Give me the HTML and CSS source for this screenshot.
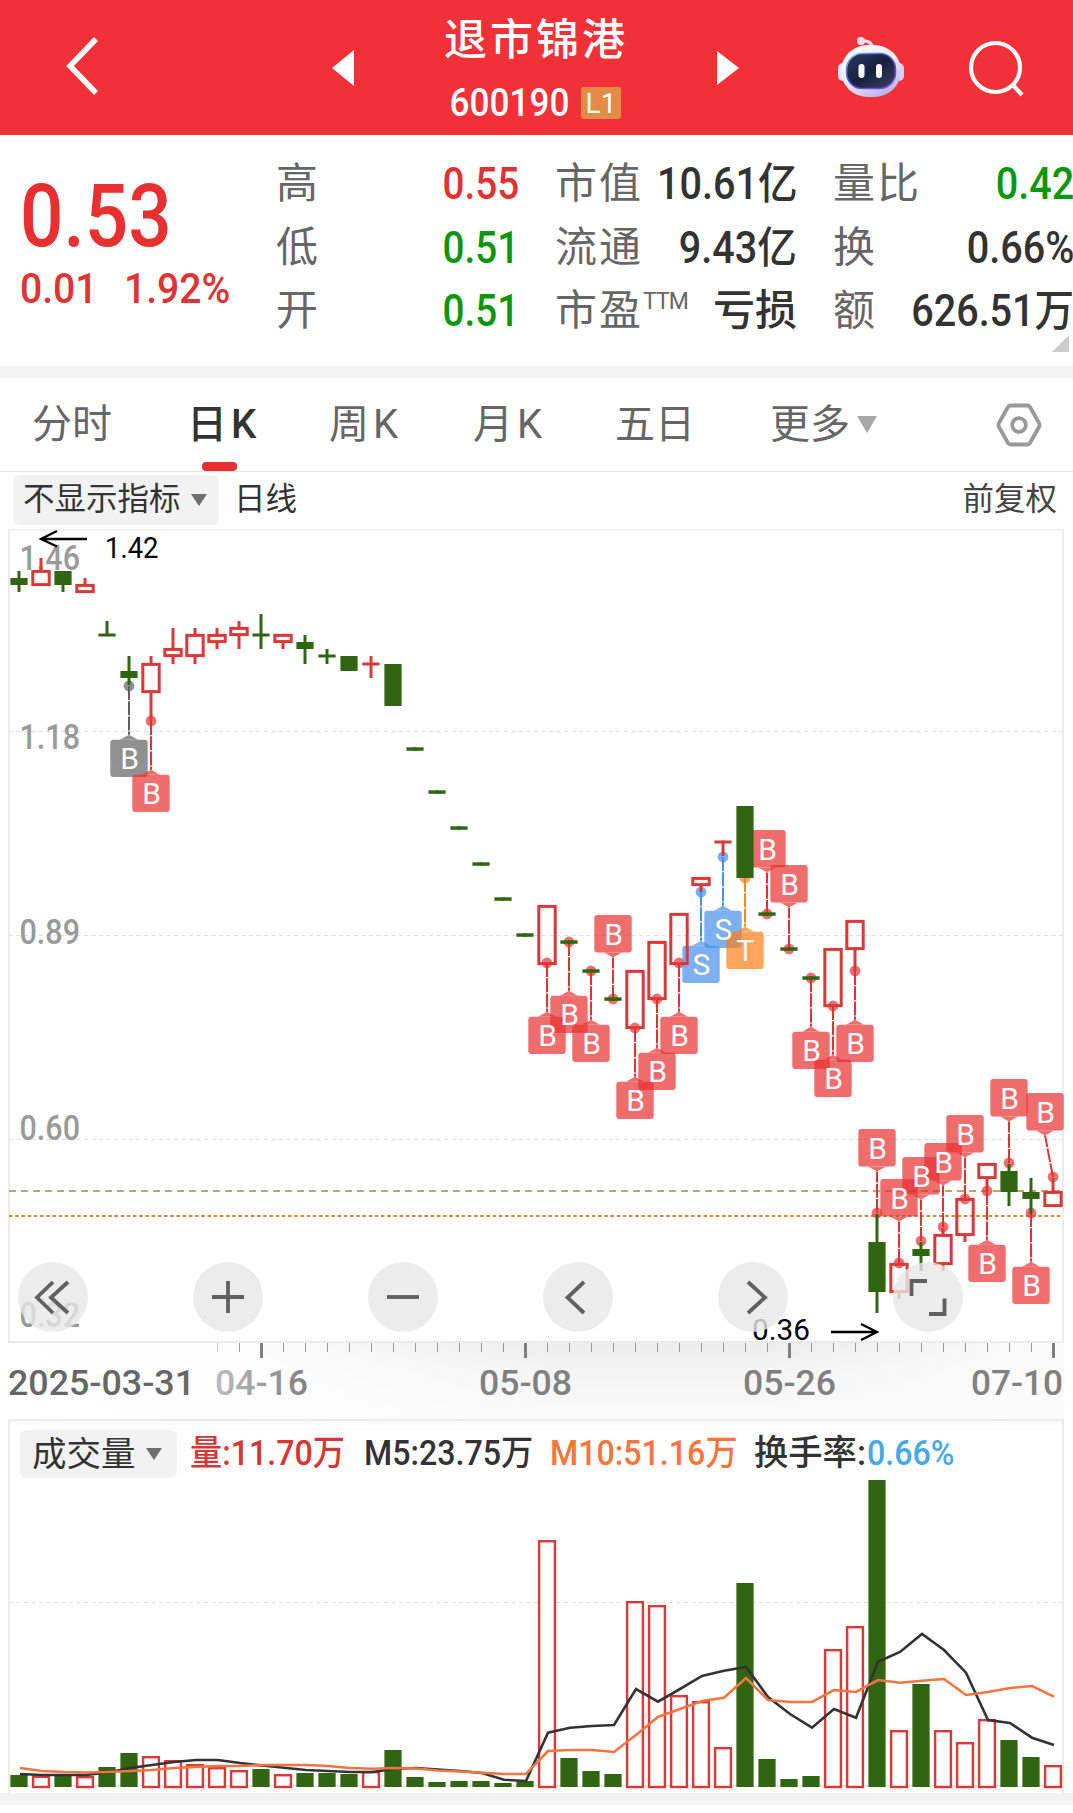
FILE: index.html
```html
<!DOCTYPE html>
<html lang="zh-CN">
<head>
<meta charset="utf-8">
<title>退市锦港 600190</title>
<link rel="stylesheet" href="styles.css">
</head>
<body>
<header class="topbar">
  <svg class="back" width="40" height="64" viewBox="0 0 40 64"><path d="M33 5 7 32 33 59"/></svg>
  <svg class="prev" width="22" height="36" viewBox="0 0 22 36"><path d="M0 18 22 0V36Z"/></svg>
  <div class="stock">
    <div class="stock-name">退市锦港</div>
    <div class="stock-code"><span class="code-num">600190</span><span class="level">L1</span></div>
  </div>
  <svg class="next" width="22" height="36" viewBox="0 0 22 36"><path d="M22 18 0 1V35Z"/></svg>
  <svg class="robot" width="68" height="64" viewBox="0 0 68 64">
    <defs>
      <linearGradient id="shell" x1="0" y1="0" x2="0.6" y2="1"><stop offset="0" stop-color="#fff"/><stop offset=".6" stop-color="#eeeafa"/><stop offset="1" stop-color="#bdb6e8"/></linearGradient>
      <linearGradient id="rim" x1="0" y1="0" x2="1" y2="1"><stop offset="0" stop-color="#69d6f2"/><stop offset=".45" stop-color="#4a4ad0"/><stop offset="1" stop-color="#8a4be0"/></linearGradient>
      <linearGradient id="visor" x1="0" y1="0" x2="1" y2="1"><stop offset="0" stop-color="#2d3a60"/><stop offset=".5" stop-color="#18203f"/><stop offset="1" stop-color="#3a4165"/></linearGradient>
    </defs>
    <path d="M24 6Q34 5 35.500 12" fill="none" stroke="#f3e4ee" stroke-width="3"/>
    <circle cx="24" cy="6" r="4" fill="#fbdfe6"/>
    <rect x="1" y="28" width="10" height="18" rx="5" fill="#e9e7fa"/>
    <rect x="57" y="28" width="10" height="18" rx="5" fill="#d6d2f4"/>
    <rect x="4" y="10" width="60" height="52" rx="27" fill="url(#shell)"/>
    <rect x="9.500" y="18.500" width="49" height="35" rx="16" fill="url(#visor)" stroke="url(#rim)" stroke-width="1.600"/>
    <rect x="21.500" y="29" width="6" height="14" rx="3" fill="#fff"/>
    <rect x="39" y="29" width="6" height="14" rx="3" fill="#fff"/>
  </svg>
  <svg class="search" width="60" height="60" viewBox="0 0 60 60"><circle cx="28.500" cy="29.500" r="24.500"/><path d="M46 47 55 57"/></svg>
</header>

<section class="quote">
  <div class="price-block">
    <div class="price">0.53</div>
    <div class="change"><span>0.01</span><span>1.92%</span></div>
  </div>
  <div class="col">
    <div class="row"><span class="key">高</span><span class="val up">0.55</span></div>
    <div class="row"><span class="key">低</span><span class="val down">0.51</span></div>
    <div class="row"><span class="key">开</span><span class="val down">0.51</span></div>
  </div>
  <div class="col">
    <div class="row"><span class="key">市值</span><span class="val">10.61亿</span></div>
    <div class="row"><span class="key">流通</span><span class="val">9.43亿</span></div>
    <div class="row"><span class="key">市盈<sup>TTM</sup></span><span class="val cjk">亏损</span></div>
  </div>
  <div class="col">
    <div class="row"><span class="key">量比</span><span class="val down">0.42</span></div>
    <div class="row"><span class="key">换</span><span class="val">0.66%</span></div>
    <div class="row"><span class="key">额</span><span class="val">626.51万</span></div>
  </div>
  <i class="corner"></i>
</section>

<nav class="tabs">
  <span class="tab t1">分时</span>
  <span class="tab t2 active">日<b>K</b></span>
  <span class="tab t3">周<b>K</b></span>
  <span class="tab t4">月<b>K</b></span>
  <span class="tab t5">五日</span>
  <span class="tab t6">更多<i class="caret big"></i></span>
  <svg class="gear" width="46" height="46" viewBox="0 0 46 46"><path d="M14.500 3.500h17q1.500 0 2.500 1.500l9 16q1 2 0 4l-9 16q-1 1.500-2.500 1.500h-17q-1.500 0-2.500-1.500l-9-16q-1-2 0-4l9-16q1-1.500 2.500-1.500z"/><circle cx="23" cy="23" r="6.800"/></svg>
</nav>

<div class="toolbar">
  <span class="pill"><span>不显示指标</span><i class="caret"></i></span>
  <span class="period">日线</span>
  <span class="adjust">前复权</span>
</div>

<svg id="kline" class="kline" width="1073" height="890" viewBox="0 529 1073 890">
  <defs>
    <linearGradient id="stripV" x1="0" y1="0" x2="0" y2="1"><stop offset="0" stop-color="#ececec"/><stop offset=".35" stop-color="#f4f4f4"/><stop offset="1" stop-color="#fafafa"/></linearGradient>
    <linearGradient id="stripFade" x1="0" y1="0" x2="1" y2="0"><stop offset="0" stop-color="#fff"/><stop offset=".42" stop-color="#fff" stop-opacity=".85"/><stop offset="1" stop-color="#fff" stop-opacity="0"/></linearGradient>
    <linearGradient id="stripFadeR" x1="0" y1="0" x2="1" y2="0"><stop offset="0" stop-color="#fbfbfb" stop-opacity="0"/><stop offset="1" stop-color="#fbfbfb"/></linearGradient>
    <linearGradient id="dateFade" x1="0" y1="0" x2="1" y2="0"><stop offset="0" stop-color="#bdbdbd"/><stop offset="1" stop-color="#808080"/></linearGradient>
  </defs>
</svg>

<section class="volume">
  <div class="legend">
    <span class="pill vol-pill"><span>成交量</span><i class="caret"></i></span>
    <span class="item l1"><span>量:11.70万</span></span>
    <span class="item l2"><span>M5:23.75万</span></span>
    <span class="item l3"><span>M10:51.16万</span></span>
    <span class="item l4"><span>换手率:</span></span>
    <span class="item l5"><span>0.66%</span></span>
  </div>
  <svg id="volume" class="bars" width="1073" height="313" viewBox="0 1480 1073 313"></svg>
</section>
<div class="band"></div>
<script src="chart.js"></script>
</body>
</html>
```
FILE: styles.css
```css
* { box-sizing: border-box; }
body {
  margin: 0;
  width: 1073px;
  height: 1813px;
  overflow: hidden;
  background: #fff;
  color: #333;
  font-family: Roboto, "Noto Sans CJK SC", sans-serif;
}
svg { display: block; flex: none; }
i { display: block; }

.topbar {
  display: flex;
  height: 135px;
  background: #f13037;
  color: #fff;
}
.back { margin: 34px 0 0 63px; fill: none; stroke: #fff; stroke-width: 5.5; }
.prev { margin: 50px 0 0 229px; fill: #fff; }
.next { margin: 50px 0 0 89px; fill: #fff; }
.robot { margin: 35px 0 0 98px; }
.search { margin: 38px 0 0 62px; fill: none; stroke: #fff; stroke-width: 4.2; }
.stock { width: 184px; margin-left: 90px; padding-top: 9px; white-space: nowrap; }
.stock-name { height: 62px; line-height: 62px; font-size: 43px; letter-spacing: 3px; font-weight: 500; }
.stock-code { display: flex; height: 64px; align-items: center; }
.code-num {
  width: 137px;
  padding-left: 6px;
  font-size: 38px;
  font-weight: 500;
  transform: scaleX(0.925);
  transform-origin: left;
}
.level {
  width: 40px;
  height: 32px;
  border-radius: 3px;
  background: #e38c46;
  font-size: 28px;
  line-height: 33px;
  text-align: center;
}

.quote {
  position: relative;
  display: grid;
  grid-template-columns: 276px 243px 242px 239px;
  height: 243px;
  border-bottom: 12px solid #f3f3f3;
  overflow: hidden;
}
.price-block { padding: 30px 0 0 20px; color: #e03333; white-space: nowrap; }
.price {
  height: 101px;
  line-height: 101px;
  font-size: 88px;
  font-weight: 500;
  color: #e83030;
  transform: scaleX(0.87);
  transform-origin: left;
}
.change { display: flex; height: 45px; line-height: 45px; font-size: 43px; font-weight: 500; }
.change span { width: 104px; transform: scaleX(0.91); transform-origin: left; }
.col { padding-top: 17px; }
.col:nth-child(2) .val { transform: scaleX(0.89); }
.col:nth-child(3) { margin-left: 36px; margin-right: -36px; }
.col:nth-child(4) { margin-left: 72px; margin-right: -74px; }
.row { display: flex; justify-content: space-between; height: 63.5px; line-height: 66px; white-space: nowrap; }
.key { color: #666; font-size: 42px; letter-spacing: 2px; font-family: "Noto Sans CJK SC", sans-serif; line-height: 56px; }
.key sup { font: 400 23px/1 Roboto, sans-serif; letter-spacing: -1px; vertical-align: 16px; }
.val { font-size: 43.5px; transform: scaleX(0.91); transform-origin: right; font-weight: 500; }
.val.up { color: #e03333; }
.val.down { color: #0a980a; }
.col .val.cjk { transform: none; font-size: 42px; line-height: 64px; }
.corner { position: absolute; right: 4px; bottom: 14px; border: solid transparent; border-width: 0 0 17px 17px; border-bottom-color: #ccc; }

.tabs {
  display: grid;
  grid-template-columns: 155px 142px 144px 142px 155px 227px 46px;
  padding-left: 32px;
  height: 94px;
  align-items: center;
  border-bottom: 1px solid #e6e6e6;
  color: #666;
  font-size: 40px;
}
.tab { position: relative; display: flex; align-items: center; height: 93px; white-space: nowrap; line-height: 92px; }
.tab b { margin-left: 4px; font-weight: 400; }
.tab.active { color: #333; font-weight: 500; }
.tab.active b { font-weight: 500; }
.tab.active::after { content: ""; position: absolute; left: 15px; bottom: 0; width: 35px; height: 9px; border-radius: 4px; background: #e83030; }
.caret { width: 0; border: solid transparent; border-width: 12px 8px 0; border-top-color: #6e6e6e; margin-left: 10px; }
.caret.big { border-width: 17px 10px 0; border-top-color: #a8a8a8; margin-left: 7px; }
.gear { fill: none; stroke: #999; stroke-width: 3.8; margin-left: -1px; }

.toolbar { display: flex; align-items: flex-start; height: 57px; padding: 3px 16px 0 13px; font-size: 31.5px; line-height: 50px; }
.pill { display: flex; align-items: center; width: 206px; height: 50px; padding-left: 10px; border-radius: 6px; background: #f2f2f2; white-space: nowrap; }
.period { margin-left: 15px; }
.adjust { margin-left: auto; color: #444; }

.kline text { font-family: Roboto, "Liberation Sans", sans-serif; }

.volume { height: 374px; margin-left: 8px; width: 1056px; border: 2px solid #ebebeb; border-bottom: 0; }
.legend {
  display: grid;
  grid-template-columns: 157px 174px 186px 204px 114px 100px;
  height: 59px;
  padding: 6px 0 0 10px;
  align-items: center;
  font-size: 35px;
  line-height: 48px;
  font-weight: 500;
  white-space: nowrap;
  background: linear-gradient(#fafafa 4px, #fff 4px);
}
.vol-pill { width: 157px; height: 48px; padding-left: 12px; font-size: 34.5px; font-weight: 400; }
.item { height: 48px; padding-left: 13px; }
.item span { display: inline-block; transform: scaleX(0.92); transform-origin: left; }
.l1 { color: #d83535; }
.l3 { color: #f7743d; }
.l4 span { transform: scaleX(0.98); }
.l5 { padding-left: 12px; color: #45a8ea; }
.bars { margin-left: -10px; }
.band { height: 12px; background: #f3f3f3; }
```
FILE: chart.js
```js
const RED = '#db3838', GREEN = '#306612';
const NS = 'http://www.w3.org/2000/svg';
const X = i => 19 + 22 * i;
const kline = document.getElementById('kline');
const volume = document.getElementById('volume');

function add(parent, tag, attrs, text) {
  const el = document.createElementNS(NS, tag);
  for (const k in attrs) el.setAttribute(k, attrs[k]);
  if (text) el.textContent = text;
  parent.appendChild(el);
  return el;
}
const line = (p, x1, y1, x2, y2, stroke, w, dash) =>
  add(p, 'line', { x1, y1, x2, y2, stroke, 'stroke-width': w, ...(dash ? { 'stroke-dasharray': dash } : {}) });
const label = (x, y, size, width, fill, text, weight = 400) =>
  add(kline, 'text', { x, y, 'font-size': size, 'font-weight': weight, fill, textLength: width, lengthAdjust: 'spacingAndGlyphs' }, text);

// type, wick top, body top, body bottom, wick bottom
const candles = [
  ['g',571,578,585,592],['r',558,570,586,586],['g',571,571,585,592],['r',578,584,593,593],['g',621,633.5,636.5,636],
  ['g',656,671,678,685],['r',656,663,693,721],['r',628,648,657,664],['r',628,634,657,664],['r',628,634,643,649],
  ['r',621,627,636,649],['g',614,633.5,636.5,649],['r',634,634,643,649],['g',635,642,649,664],['g',649,654.5,657.5,664],
  ['g',656,656,671,671],['d',656,662.5,665.5,678],['g',664,664,706,706],['g',747.3,747.3,750.8,750.8],['g',790.3,790.3,793.8,793.8],
  ['g',826.3,826.3,829.8,829.8],['g',862.3,862.3,865.8,865.8],['g',897.3,897.3,900.8,900.8],['g',933.3,933.3,936.8,936.8],['r',905,905,965,965],
  ['g',940.3,940.3,943.8,943.8],['g',969.3,969.3,972.8,972.8],['g',997.3,997.3,1000.8,1000.8],['r',970,970,1029,1029],['r',941,941,1000,1000],
  ['r',913,913,965,965],['r',877,877,886,892],['d',840.5,840.5,843.5,856],['g',806,806,878,878],['g',912.3,912.3,915.8,915.8],
  ['g',947.3,947.3,950.8,950.8],['g',976.3,976.3,979.8,979.8],['r',948,948,1007,1007],['r',920,920,950,971],['g',1214,1242,1292,1313],
  ['r',1263,1263,1293,1299],['g',1242,1249,1256,1271],['r',1228,1234,1265,1271],['r',1198,1198,1236,1242],['r',1163,1163,1179,1191],
  ['g',1164,1171,1192,1206],['g',1178,1192,1199,1214],['r',1178,1191,1207,1207],
];
// index, letter, dot y, side (1 below, -1 above), colour
const marks = [
  [5,'B',686,1,'k'],[6,'B',721,1,'r'],[24,'B',963,1,'r'],[25,'B',942,1,'r'],[26,'B',971,1,'r'],[27,'B',999,-1,'r'],
  [28,'B',1028,1,'r'],[29,'B',999,1,'r'],[30,'B',963,1,'r'],[31,'S',892,1,'b'],[32,'S',857,1,'b'],[33,'T',878,1,'o'],
  [34,'B',914,-1,'r'],[35,'B',949,-1,'r'],[36,'B',978,1,'r'],[37,'B',1006,1,'r'],[38,'B',971,1,'r'],[39,'B',1213,-1,'r'],
  [40,'B',1263,-1,'r'],[41,'B',1241,-1,'r'],[42,'B',1227,-1,'r'],[43,'B',1199,-1,'r'],[44,'B',1191,1,'r'],[45,'B',1163,-1,'r'],
  [46,'B',1213,1,'r'],[47,'B',1177,-1,'r'],
];
const fills = { r: '#e93030', b: '#458fec', o: '#ff7e18', k: '#626262' };
const stems = { r: '#dc3333', b: '#4a90e2', o: '#f08a20', k: '#606060' };

// date strip
add(kline, 'rect', { x: 0, y: 1342, width: 1064, height: 80, fill: 'url(#stripV)' });
add(kline, 'rect', { x: 0, y: 1342, width: 560, height: 80, fill: 'url(#stripFade)' });
add(kline, 'rect', { x: 760, y: 1342, width: 304, height: 80, fill: 'url(#stripFadeR)' });
for (let i = 9; i < 48; i++) {
  if ((i + 1) % 12) line(kline, X(i) + .5, 1343, X(i) + .5, 1352, i < 10 ? '#ccc' : '#999', 1);
  else line(kline, X(i) + .5, 1343, X(i) + .5, 1358, '#808080', 3);
}
// frame and grid
add(kline, 'rect', { x: 9, y: 529.5, width: 1054, height: 812.5, fill: 'none', stroke: '#ebebeb', 'stroke-width': 2 });
for (const y of [731.5, 935.5, 1139.5]) line(kline, 9, y, 1063, y, '#dedede', 1.2, '4 3.5');
for (const [y, t] of [[570, '1.46'], [749, '1.18'], [944, '0.89'], [1140, '0.60'], [1327, '0.32']])
  label(19.5, y, 35, 60.5, '#9a9a9a', t, 500);
line(kline, 9, 1191, 1063, 1191, '#c7a26e', 2, '7 5');
line(kline, 9, 1216, 1063, 1216, '#cf8b3c', 2, '3.6 2.6');

for (const [i, ch, y, side, c] of marks) {
  const x = X(i), bx = i === 47 ? 1045 : x, top = side > 0 ? y + 53.7 : y - 84;
  const edge = side > 0 ? top : top + 37.4, tip = edge - side * 5;
  add(kline, 'circle', { cx: x, cy: y, r: 5.4, fill: fills[c], 'fill-opacity': .7 });
  line(kline, x, y, bx, tip, stems[c], 2, '14 1.2');
  const g = add(kline, 'g', { fill: fills[c], opacity: .7 });
  add(g, 'rect', { x: bx - 18.7, y: top, width: 37.4, height: 37.4, rx: 3 });
  add(g, 'path', { d: `M${bx - 9} ${edge}L${bx} ${tip}L${bx + 9} ${edge}Z` });
}
for (const [i, ch, y, side] of marks) {
  const bx = i === 47 ? 1045 : X(i), top = side > 0 ? y + 53.7 : y - 84;
  add(kline, 'text', { x: bx + .5, y: top + 29.5, 'font-size': 30, fill: '#fff', 'text-anchor': 'middle' }, ch);
}

candles.forEach(([t, hi, top, bot, lo], i) => {
  const x = X(i), color = t === 'g' ? GREEN : RED;
  if (t === 'r') {
    if (hi < top) line(kline, x, hi, x, top + 1, color, 3);
    if (lo > bot) line(kline, x, bot - 1, x, lo, color, 3);
    add(kline, 'rect', { x: x - 8.2, y: top + 1.4, width: 16.4, height: bot - top - 2.8, fill: 'none', stroke: color, 'stroke-width': 3 });
  } else {
    line(kline, x, hi, x, lo, color, 3);
    add(kline, 'rect', { x: x - 8.6, y: top, width: 17.2, height: bot - top, fill: color });
  }
});

// extremes
label(105, 558, 30, 53.5, '#000', '1.42');
label(752, 1340, 30, 58, '#000', '0.36');
add(kline, 'path', { d: 'M87 539H41M57 531 41 539 57 546.500M831 1332H877M861 1324 877 1332 861 1340', fill: 'none', stroke: '#000', 'stroke-width': 2.3 });

// dates
label(8, 1395, 35, 187, '#666', '2025-03-31', 500);
label(215, 1395, 35, 93, 'url(#dateFade)', '04-16', 500);
label(479, 1395, 35, 93, '#808080', '05-08', 500);
label(743, 1395, 35, 93, '#808080', '05-26', 500);
label(971, 1395, 35, 92, '#808080', '07-10', 500);

// floating controls
const icons = [
  'M53 1282 37 1297.500 53 1313M68 1282 51 1297.500 68 1313', 'M212 1297H244M228 1281V1313', 'M387 1297H419',
  'M584 1282 567.500 1297.500 584 1313', 'M748 1282 765 1297.500 748 1313', 'M911.500 1296V1281H927M929 1314H944.500V1298.500',
];
icons.forEach((d, i) => {
  add(kline, 'circle', { cx: 53 + 175 * i, cy: 1297, r: 35, fill: '#e7e7e7', 'fill-opacity': .8 });
  add(kline, 'path', { d, fill: 'none', stroke: '#606060', 'stroke-width': 3.8 });
});

// volume bars
const tops = [1775,1775.7,1776,1776,1767,1753,1756,1760,1764,1767,1770,1769,1774,1773,1773,1774,1771,1750,1777,1782,1781,1781,1783,1781,
  1540,1758,1771,1774,1601,1605,1695,1701,1747,1583,1759,1779,1776,1649,1626,1480,1730,1684,1730,1742,1719,1740,1757,1765];
line(volume, 9, 1602.5, 1063, 1602.5, '#dedede', 1.2, '4 3.5');
line(volume, 9, 1786, 1063, 1786, '#ebebeb', 2);
tops.forEach((y, i) => {
  if (candles[i][0] === 'g') add(volume, 'rect', { x: X(i) - 8.6, y, width: 17.2, height: 1787 - y, fill: GREEN });
  else add(volume, 'rect', { x: X(i) - 7.9, y: y + 1.2, width: 15.8, height: 1785.8 - y, fill: '#fff', stroke: RED, 'stroke-width': 2.4 });
});
const m5 = [1774,1775,1775,1775,1772.5,1768,1765,1762,1760,1760,1763,1765.5,1767.7,1770,1771,1772,1772,1769,1768,1769.5,1771,1773,1779.7,1781,
  1732.7,1727.7,1726,1725,1689,1701.7,1689,1676,1670.7,1667,1697,1714,1727.7,1709,1717.7,1661.7,1652,1634,1650,1672.7,1720,1723,1737.7,1745];
const m10 = [1768,1771,1772,1772.5,1772,1771,1770,1768,1767,1766,1766,1765,1765,1765,1766,1768,1768.7,1768,1768.5,1770.5,1771.5,1772.7,1774,1774,
  1751,1750,1750,1752,1735,1717,1709,1701,1697.7,1678,1700,1702,1702,1690,1692,1680,1682.7,1680.7,1679,1695,1692,1688,1686,1696.7];
for (const [s, c] of [[m5, '#333'], [m10, '#f07541']])
  add(volume, 'polyline', { points: s.map((y, i) => `${X(i) + 1},${y}`).join(' '), fill: 'none', stroke: c, 'stroke-width': 2.6 });
```
